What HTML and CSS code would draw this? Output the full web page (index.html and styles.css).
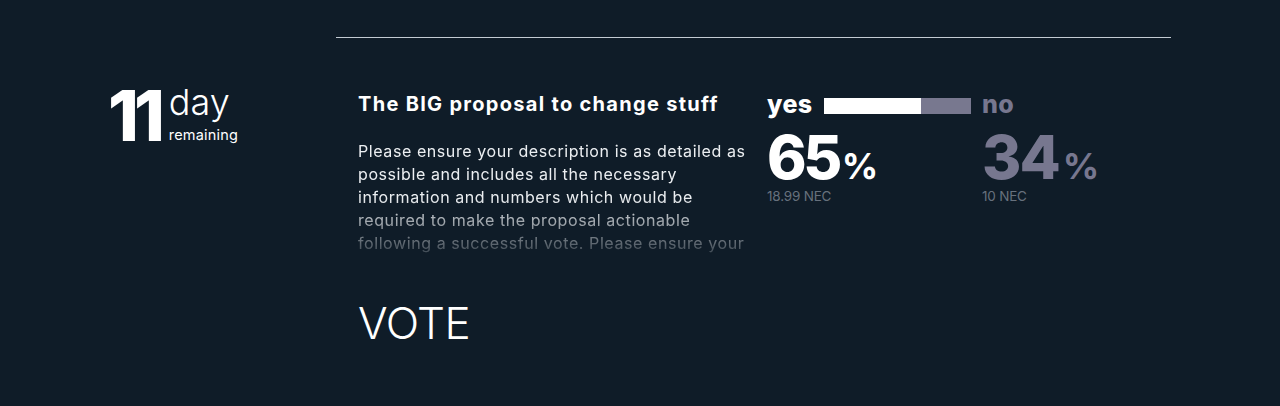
FILE: index.html
```html
<!DOCTYPE html>
<html lang="en">
<head>
<meta charset="utf-8">
<title>Proposals</title>
<link rel="stylesheet" href="styles.css">
</head>
<body>
<main class="page">
  <div class="rule"></div>
  <section class="row">
    <div class="days">
      <span class="days-num">11</span>
      <span class="days-label">
        <span class="days-unit">day</span>
        <span class="days-rem">remaining</span>
      </span>
    </div>
    <div class="proposal">
      <h2 class="title">The BIG proposal to change stuff</h2>
      <p class="desc">Please ensure your description is as detailed as possible and includes all the necessary information and numbers which would be required to make the proposal actionable following a successful vote. Please ensure your description is as detailed as possible.</p>
      <a class="vote" href="#">VOTE</a>
    </div>
    <div class="tally">
      <div class="side yes">
        <div class="side-head">
          <span class="side-label">yes</span>
          <span class="bar"><span class="bar-fill" style="width:66%"></span></span>
        </div>
        <div class="pct"><span class="pct-num">65</span><span class="pct-sign">%</span></div>
        <div class="amount">18.99 NEC</div>
      </div>
      <div class="side no">
        <div class="side-head">
          <span class="side-label">no</span>
        </div>
        <div class="pct"><span class="pct-num">34</span><span class="pct-sign">%</span></div>
        <div class="amount">10 NEC</div>
      </div>
    </div>
  </section>
</main>
</body>
</html>
```
FILE: styles.css
```css
html, body {
  margin: 0;
  padding: 0;
  background: #0f1c28;
  color: #ffffff;
  font-family: "Inter", "Noto Sans", sans-serif;
}

.page {
  padding-top: 37px;
  height: 406px;
  box-sizing: border-box;
}

.rule {
  margin-left: 336px;
  width: 835px;
  height: 1px;
  background: #c3cbd3;
}

.row {
  display: flex;
  padding-left: 108px;
  margin-top: 43px;
}

.days {
  width: 250px;
  display: flex;
  align-items: flex-start;
  gap: 9px;
}

.days-num {
  font-size: 70px;
  font-weight: 800;
  line-height: 1;
  letter-spacing: -5px;
}

.days-label {
  display: flex;
  flex-direction: column;
  padding-top: 4px;
}

.days-unit {
  font-size: 36px;
  font-weight: 300;
  line-height: 34px;
}

.days-rem {
  margin-top: 8px;
  font-size: 14.5px;
  font-weight: 400;
  line-height: 16px;
  letter-spacing: 0.2px;
}

.proposal {
  width: 409px;
  display: flex;
  flex-direction: column;
}

.title {
  margin: 11px 0 0;
  font-size: 20px;
  font-weight: 700;
  line-height: 24px;
  letter-spacing: 1.3px;
  white-space: nowrap;
}

.desc {
  margin: 24px 0 0;
  width: 394px;
  font-size: 16px;
  line-height: 23px;
  letter-spacing: 0.58px;
  color: #eceff2;
  height: 115px;
  overflow: hidden;
  -webkit-mask-image: linear-gradient(to bottom, #000 50%, rgba(0,0,0,0.2) 100%);
  mask-image: linear-gradient(to bottom, #000 50%, rgba(0,0,0,0.2) 100%);
}

.vote {
  margin-top: 44px;
  font-size: 44px;
  font-weight: 300;
  line-height: 48px;
  letter-spacing: -0.5px;
  color: #ffffff;
  text-decoration: none;
  align-self: flex-start;
}

.tally {
  display: flex;
  gap: 11px;
  padding-top: 10px;
}

.side {
  display: flex;
  flex-direction: column;
}

.yes { width: 204px; }

.side-head {
  display: flex;
  justify-content: space-between;
  height: 26px;
}

.side-label {
  font-size: 25px;
  font-weight: 800;
  line-height: 26px;
  letter-spacing: 0.4px;
}

.bar {
  display: flex;
  align-self: flex-end;
  margin-bottom: 3px;
  width: 147px;
  height: 16px;
  background: #78788f;
}

.bar-fill {
  display: block;
  height: 100%;
  background: #ffffff;
}

.no { color: #77778f; }

.pct {
  display: flex;
  align-items: baseline;
  margin-top: 10px;
  line-height: 1;
}

.pct-num {
  font-size: 60px;
  font-weight: 800;
  letter-spacing: -3.5px;
}

.pct-sign {
  font-size: 36px;
  font-weight: 700;
  margin-left: 3px;
}

.no .pct-num { letter-spacing: -2px; }
.no .pct-sign { margin-left: 4px; }

.amount {
  margin-top: 1px;
  font-size: 13.5px;
  color: #67717d;
  letter-spacing: -0.2px;
}
```
